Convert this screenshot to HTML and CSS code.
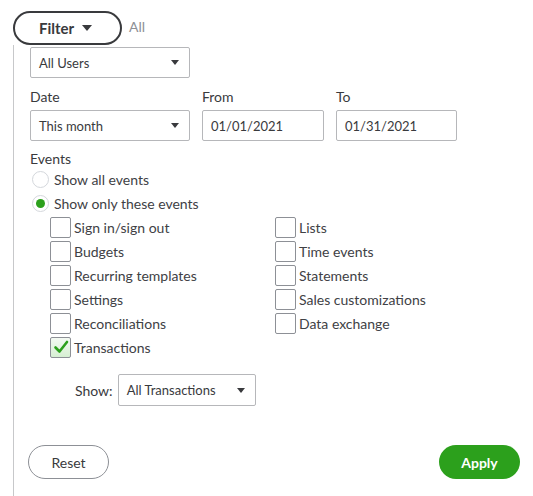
FILE: index.html
```html
<!DOCTYPE html>
<html>
<head>
<meta charset="utf-8">
<link rel="stylesheet" href="styles.css">
</head>
<body>
<div class="top">
  <button class="filter-btn">Filter <span class="caret"></span></button>
  <span class="all">All</span>
</div>
<div class="panel">
  <div class="select w160">All Users <span class="caret sm"></span></div>

  <div class="daterow">
    <div class="field">
      <div class="label">Date</div>
      <div class="select w160">This month <span class="caret sm"></span></div>
    </div>
    <div class="field">
      <div class="label">From</div>
      <div class="input w122">01/01/2021</div>
    </div>
    <div class="field">
      <div class="label">To</div>
      <div class="input w121">01/31/2021</div>
    </div>
  </div>

  <div class="label events">Events</div>
  <div class="radio"><span class="circle"></span>Show all events</div>
  <div class="radio"><span class="circle on"></span>Show only these events</div>

  <div class="checks">
    <div class="col">
      <div class="check"><span class="box"></span>Sign in/sign out</div>
      <div class="check"><span class="box"></span>Budgets</div>
      <div class="check"><span class="box"></span>Recurring templates</div>
      <div class="check"><span class="box"></span>Settings</div>
      <div class="check"><span class="box"></span>Reconciliations</div>
      <div class="check"><span class="box checked"><svg width="18" height="18" viewBox="0 0 18 18"><path d="M3.5 9.5 L7.5 13.5 L15 4" fill="none" stroke="#2ca01c" stroke-width="2.6" stroke-linecap="round" stroke-linejoin="round"/></svg></span>Transactions</div>
    </div>
    <div class="col">
      <div class="check"><span class="box"></span>Lists</div>
      <div class="check"><span class="box"></span>Time events</div>
      <div class="check"><span class="box"></span>Statements</div>
      <div class="check"><span class="box"></span>Sales customizations</div>
      <div class="check"><span class="box"></span>Data exchange</div>
    </div>
  </div>

  <div class="showrow">
    <span class="showlabel">Show:</span>
    <div class="select w138">All Transactions <span class="caret sm"></span></div>
  </div>

  <div class="actions">
    <button class="btn reset">Reset</button>
    <button class="btn apply">Apply</button>
  </div>
</div>
</body>
</html>
```
FILE: styles.css
```css
* { box-sizing: border-box; }
html, body { margin: 0; padding: 0; background: #fff; }
body {
  font-family: Lato, "Open Sans", sans-serif;
  font-size: 13px;
  color: #404145;
  width: 533px;
  height: 496px;
  overflow: hidden;
}
.top {
  display: flex;
  align-items: center;
  padding: 11px 0 0 13px;
  height: 45px;
}
.filter-btn {
  width: 109px;
  height: 34px;
  border: 2px solid #393a3d;
  border-radius: 17px;
  background: #fff;
  font-family: inherit;
  font-size: 15px;
  font-weight: bold;
  color: #393a3d;
  display: flex;
  align-items: center;
  justify-content: center;
  gap: 8px;
  padding: 0 4px 0 0;
}
.caret {
  width: 0; height: 0;
  border-left: 5px solid transparent;
  border-right: 5px solid transparent;
  border-top: 6px solid #393a3d;
  display: inline-block;
}
.caret.sm {
  border-left-width: 4px;
  border-right-width: 4px;
  border-top-width: 5px;
}
.all {
  color: #8d9096;
  font-size: 14px;
  margin-left: 7px;
  margin-top: -4px;
}
.panel {
  margin-left: 13px;
  border-left: 1px solid #c7c8ca;
  padding: 2px 0 0 16px;
  height: 451px;
}
.select, .input {
  height: 31px;
  border: 1px solid #b6b7ba;
  border-radius: 2px;
  display: flex;
  align-items: center;
  justify-content: space-between;
  padding: 0 10px 0 8px;
  font-size: 13px;
  color: #393a3d;
}
.w160 { width: 160px; }
.w122 { width: 122px; }
.w121 { width: 121px; }
.w138 { width: 138px; }
.daterow {
  display: flex;
  gap: 12px;
  margin-top: 8px;
}
.label {
  font-size: 14px;
  color: #393a3d;
  height: 24px;
  line-height: 22px;
}
.events { margin-top: 9px; height: 17px; line-height: 18px; }
.radio {
  display: flex;
  align-items: center;
  height: 24px;
  margin-left: 2px;
  font-size: 14px;
}
.circle {
  width: 17px; height: 17px;
  border: 1px solid #d4d7dc;
  border-radius: 50%;
  margin-right: 5px;
  display: inline-flex;
  align-items: center;
  justify-content: center;
}
.circle.on::after {
  content: "";
  width: 9px; height: 9px;
  border-radius: 50%;
  background: #2ca01c;
}
.checks {
  display: flex;
  margin-left: 20px;
  margin-top: 0;
}
.col:first-child { width: 225px; }
.check {
  display: flex;
  align-items: center;
  height: 24px;
  font-size: 14px;
}
.box {
  width: 21px; height: 21px;
  border: 1px solid #8d9096;
  border-radius: 2px;
  margin-right: 3px;
  display: inline-flex;
  align-items: center;
  justify-content: center;
}
.box.checked {
  background: linear-gradient(#f4faf3, #d6efd2);
}
.showrow {
  display: flex;
  align-items: center;
  margin-top: 15px;
  padding-left: 45px;
  gap: 5px;
}
.showrow .select { height: 32px; }
.showlabel { font-size: 14px; color: #393a3d; }
.actions {
  display: flex;
  justify-content: space-between;
  margin-top: 39px;
  width: 492px;
  margin-left: -2px;
}
.btn {
  width: 81px;
  height: 34px;
  border-radius: 17px;
  font-family: inherit;
  font-size: 14px;
}
.reset {
  background: #fff;
  border: 1px solid #8d9096;
  color: #393a3d;
}
.apply {
  background: #2ca01c;
  border: none;
  color: #fff;
  font-weight: bold;
}
```
